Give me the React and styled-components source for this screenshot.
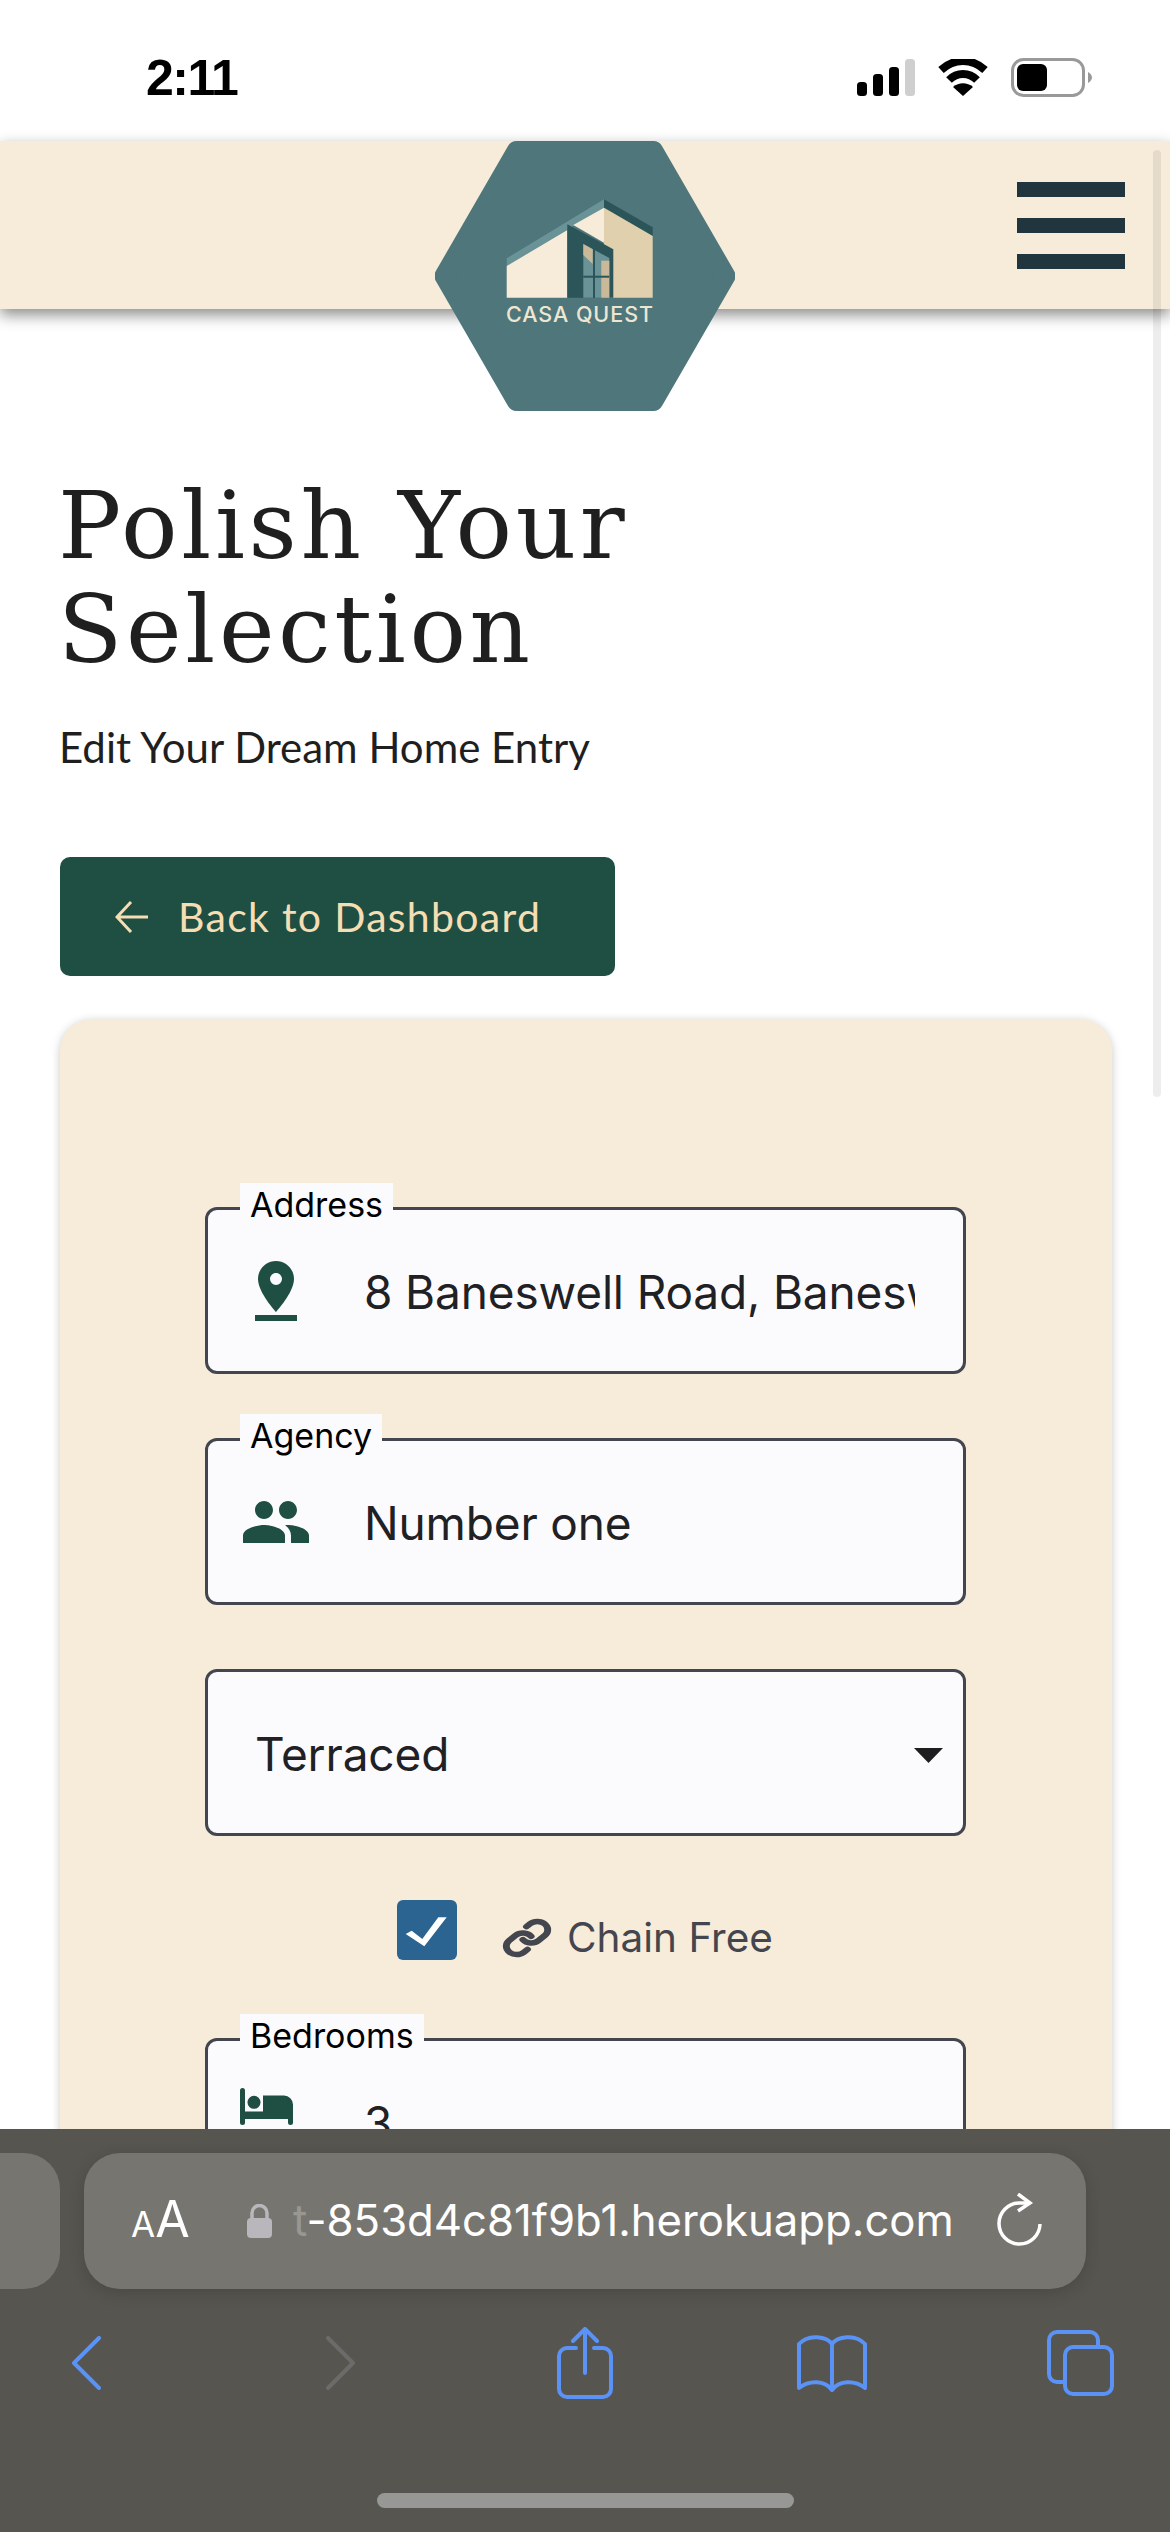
import styled, { createGlobalStyle } from 'styled-components'
import { MdPinDrop, MdPeople } from 'react-icons/md'

const GlobalStyle = createGlobalStyle`
  html, body {
    margin: 0;
    padding: 0;
    background: #ffffff;
  }
  * {
    box-sizing: border-box;
  }
`

const Screen = styled.div`
  position: relative;
  width: 1170px;
  height: 2532px;
  overflow: hidden;
  background: #ffffff;
  font-family: Inter, "Liberation Sans", sans-serif;
`

const StatusBar = styled.div`
  height: 141px;
  padding: 58px 78px 0 146px;
  display: flex;
  align-items: flex-start;
  justify-content: space-between;
`

const Clock = styled.div`
  font-family: "Liberation Sans", sans-serif;
  font-size: 50px;
  line-height: 41px;
  font-weight: 700;
  color: #000000;
  letter-spacing: -1.5px;
`

const StatusIcons = styled.div`
  display: flex;
  align-items: center;
  gap: 23px;
  height: 39px;
`

const Nav = styled.nav`
  position: relative;
  height: 168px;
  background: #f7ecda;
  box-shadow: 0 6px 14px rgba(0, 0, 0, 0.45);
  display: flex;
  justify-content: flex-end;
  padding: 41px 45px 0 0;
`

const LogoMark = styled.svg`
  position: absolute;
  top: 0;
  left: 435px;
  width: 300px;
  height: 270px;
`

const Burger = styled.div`
  display: flex;
  flex-direction: column;
  gap: 21px;
`

const BurgerBar = styled.span`
  display: block;
  width: 108px;
  height: 15px;
  background: #20353e;
`

const Main = styled.main`
  padding: 165px 58px 0 60px;
`

const Title = styled.h1`
  margin: 0 0 0 -2px;
  width: 700px;
  font-family: "DejaVu Serif", serif;
  font-size: 94px;
  line-height: 104px;
  font-weight: 400;
  letter-spacing: 3.6px;
  color: #1f1f1f;
`

const Subtitle = styled.p`
  margin: 38px 0 0 -1px;
  font-family: Lato, sans-serif;
  font-size: 42px;
  line-height: 54px;
  color: #1f1f1f;
`

const BackButton = styled.div`
  margin-top: 83px;
  width: 555px;
  height: 119px;
  border-radius: 10px;
  background: #1f4f43;
  color: #f5deb3;
  display: flex;
  align-items: center;
  padding-left: 55px;
  gap: 30px;
  font-family: Lato, sans-serif;
  font-size: 41px;
  letter-spacing: 1.3px;
`

const Card = styled.section`
  margin-top: 43px;
  background: #f7ecda;
  border-radius: 32px;
  padding: 188px 146px 120px 145px;
  box-shadow: 0 2px 10px rgba(0, 0, 0, 0.22);
  display: flex;
  flex-direction: column;
`

const Field = styled.div`
  position: relative;
  height: 167px;
  margin-bottom: ${(props) => props.$after || 64}px;
  background: #fbfbfe;
  border: 3px solid #44464f;
  border-radius: 12px;
  display: flex;
  align-items: center;
  padding: 0 48px 0 ${(props) => props.$inset || 32}px;
`

const FieldLabel = styled.span`
  position: absolute;
  top: -27px;
  left: 32px;
  height: 44px;
  padding: 0 10px;
  background: #fbfbfe;
  color: #000000;
  font-size: 34px;
  line-height: 44px;
  white-space: nowrap;
`

const FieldIcon = styled.span`
  flex: none;
  width: 72px;
  height: 72px;
  margin-right: 52px;
  color: #1f4f43;
  display: flex;
  align-items: center;
  justify-content: center;
`

const FieldValue = styled.span`
  flex: 1;
  min-width: 0;
  overflow: hidden;
  white-space: nowrap;
  color: #1f2124;
  font-size: 46px;
  line-height: 60px;
  letter-spacing: -0.15px;
  padding-top: 2px;
`

const BedGlyph = styled.svg`
  flex: none;
  margin: -30px 19px 0 0;
`

const SelectArrow = styled.svg`
  position: absolute;
  right: 20px;
  top: 76px;
  width: 29px;
  height: 15px;
`

const CheckRow = styled.div`
  display: flex;
  align-items: center;
  justify-content: flex-start;
  height: 60px;
  margin: 0 0 78px 192px;
`

const CheckBox = styled.span`
  flex: none;
  width: 60px;
  height: 60px;
  border-radius: 6px;
  background: #2b6391;
  margin-right: 45px;
`

const ChainLabel = styled.span`
  display: flex;
  align-items: center;
  gap: 15px;
  color: #44464f;
  font-size: 40.500px;
  line-height: 60px;
  padding-top: 16px;
`

const Scrollbar = styled.div`
  position: absolute;
  top: 150px;
  left: 1153px;
  width: 8px;
  height: 947px;
  border-radius: 4px;
  background: rgba(0, 0, 0, 0.07);
`

const BrowserChrome = styled.div`
  position: absolute;
  left: 0;
  right: 0;
  bottom: 0;
  height: 403px;
  background: #565550;
  display: flex;
  flex-direction: column;
  padding-top: 24px;
`

const TabRow = styled.div`
  display: flex;
  gap: 24px;
  height: 136px;
`

const SideTab = styled.div`
  width: 60px;
  border-radius: 0 36px 36px 0;
  background: #777570;
`

const AddressPill = styled.div`
  width: 1002px;
  border-radius: 36px;
  background: #777570;
  box-shadow: 0 4px 16px rgba(0, 0, 0, 0.14);
  display: flex;
  align-items: center;
  padding-left: 47px;
  color: #ffffff;
`

const TextSize = styled.span`
  display: flex;
  align-items: baseline;
  width: 116px;
  font-size: 50px;
  line-height: 60px;
  small {
    font-size: 35px;
  }
`

const LockIcon = styled.svg`
  flex: none;
  width: 25px;
  height: 34px;
  margin-right: 21px;
`

const UrlText = styled.span`
  width: 660px;
  white-space: nowrap;
  overflow: hidden;
  font-size: 43.700px;
  line-height: 60px;
  span {
    color: rgba(255, 255, 255, 0.25);
  }
`

const ReloadIcon = styled.svg`
  flex: none;
  width: 46px;
  height: 56px;
  margin-left: 44px;
`

const ToolRow = styled.div`
  margin-top: 37px;
  height: 74px;
  padding-left: 56px;
  display: grid;
  grid-template-columns: 254px 245px 247px 248px 60px;
  align-items: center;
`

const ToolSlot = styled.div`
  width: 60px;
  display: flex;
  justify-content: center;
  svg {
    flex: none;
  }
`

const HomeBar = styled.div`
  margin: auto auto 24px;
  width: 417px;
  height: 15px;
  border-radius: 8px;
  background: #979795;
`

function BedIcon() {
  return (
    <BedGlyph width="53" height="37" viewBox="0 0 53 37" fill="#1f4f43">
      <rect x="0" y="0" width="5" height="37" rx="2.500" />
      <circle cx="14" cy="14.300" r="6.500" />
      <path d="M23 7.600h21a9 9 0 0 1 9 9V34.500a2.500 2.500 0 0 1-5 0V31H3v-7.400h20z" />
    </BedGlyph>
  )
}

function LinkIcon() {
  return (
    <svg width="50" height="40" viewBox="0 0 24 24" preserveAspectRatio="none" fill="none" stroke="#44464f" strokeWidth="3.300" strokeLinecap="round">
      <path d="M10 13a5 5 0 0 0 7.540.540l3-3a5 5 0 0 0-7.070-7.070l-1.720 1.710" />
      <path d="M14 11a5 5 0 0 0-7.540-.540l-3 3a5 5 0 0 0 7.070 7.070l1.710-1.710" />
    </svg>
  )
}

function House() {
  return (
    <LogoMark viewBox="0 0 300 270">
      <polygon
        points="9.500,135 81.700,10 218.300,10 290.500,135 218.300,260 81.700,260"
        fill="#4e767b"
        stroke="#4e767b"
        strokeWidth="20"
        strokeLinejoin="round"
      />
      <polygon points="71.700,117.300 169,58.300 169,66.700 71.700,125" fill="#6a9397" />
      <polygon points="169,58.300 217.700,86.300 217.700,95 169,66.700" fill="#2b5559" />
      <polygon points="169,66.700 217.700,95 217.700,156.700 169,156.700" fill="#e0d0ae" />
      <polygon points="71.700,125 132.300,89 132.300,156.700 71.700,156.700" fill="#f7ecda" />
      <polygon points="138.300,84 169,66.700 169,101.700" fill="#f7ecda" />
      <polygon points="132.300,83.300 178.300,108.300 178.300,156.700 132.300,156.700" fill="#2b5559" />
      <polygon points="148.300,103 174.300,117 174.300,156.700 148.300,156.700" fill="#6a9397" />
      <polygon points="148.300,103 157.700,108.300 157.700,123 148.300,114" fill="#c9b998" />
      <rect x="166.300" y="119.700" width="8" height="37" fill="#c9b998" />
      <rect x="158" y="105" width="2" height="52" fill="#2b5559" />
      <rect x="148.300" y="134.700" width="26" height="2" fill="#2b5559" />
      <text
        x="71"
        y="180.700"
        fontFamily="Inter, sans-serif"
        fontSize="21.500"
        fontWeight="500"
        fill="#efe6d2"
        textLength="147"
        lengthAdjust="spacing"
      >
        CASA QUEST
      </text>
    </LogoMark>
  )
}

export default function App() {
  return (
    <Screen>
      <GlobalStyle />
      <StatusBar>
        <Clock>2:11</Clock>
        <StatusIcons>
          <svg width="58" height="37" viewBox="0 0 58 37">
            <rect x="0" y="23" width="10" height="14" rx="3.500" fill="#000" />
            <rect x="16" y="15" width="10" height="22" rx="3.500" fill="#000" />
            <rect x="32" y="8" width="10" height="29" rx="3.500" fill="#000" />
            <rect x="48" y="0" width="10" height="37" rx="3.500" fill="#cfcfcf" />
          </svg>
          <svg width="50" height="37" viewBox="0 0 50 37">
            <path d="M3 11C16-1 34-1 47 11" fill="none" stroke="#000" strokeWidth="8" />
            <path d="M11 21C19 13 31 13 39 21" fill="none" stroke="#000" strokeWidth="8" />
            <path d="M25 37L15 28C21 23 29 23 35 28z" fill="#000" />
          </svg>
          <svg width="81" height="39" viewBox="0 0 81 39">
            <rect x="1.500" y="1.500" width="71" height="36" rx="11" fill="none" stroke="#999" strokeWidth="3" />
            <rect x="6" y="6" width="30" height="27" rx="6" fill="#000" />
            <path d="M77 14c2 1 4 3 4 5.500s-2 4.500-4 5.500z" fill="#999" />
          </svg>
        </StatusIcons>
      </StatusBar>

      <Nav>
        <House />
        <Burger>
          <BurgerBar />
          <BurgerBar />
          <BurgerBar />
        </Burger>
      </Nav>

      <Main>
        <Title>Polish Your Selection</Title>
        <Subtitle>Edit Your Dream Home Entry</Subtitle>
        <BackButton>
          <svg width="33" height="32" viewBox="0 0 33 32" fill="none" stroke="#f5deb3" strokeWidth="3">
            <path d="M33 16H2M16 1L2 16l14 15" />
          </svg>
          Back to Dashboard
        </BackButton>

        <Card>
          <Field>
            <FieldLabel>Address</FieldLabel>
            <FieldIcon><MdPinDrop size={72} /></FieldIcon>
            <FieldValue>8 Baneswell Road, Baneswell</FieldValue>
          </Field>
          <Field>
            <FieldLabel>Agency</FieldLabel>
            <FieldIcon><MdPeople size={72} /></FieldIcon>
            <FieldValue>Number one</FieldValue>
          </Field>
          <Field $inset={47}>
            <FieldValue>Terraced</FieldValue>
            <SelectArrow viewBox="0 0 29 15">
              <path d="M0 0h29L14.500 15z" fill="#1e1e1e" />
            </SelectArrow>
          </Field>
          <CheckRow>
            <CheckBox>
              <svg width="60" height="60" viewBox="0 0 60 60">
                <polygon points="8.700,34 14.700,30.700 25.300,39 41.300,17.300 49.700,17.300 27.300,46.300" fill="#fff" />
              </svg>
            </CheckBox>
            <ChainLabel>
              <LinkIcon />
              Chain Free
            </ChainLabel>
          </CheckRow>
          <Field>
            <FieldLabel>Bedrooms</FieldLabel>
            <FieldIcon><BedIcon /></FieldIcon>
            <FieldValue>3</FieldValue>
          </Field>
        </Card>
      </Main>

      <Scrollbar />

      <BrowserChrome>
        <TabRow>
          <SideTab />
          <AddressPill>
            <TextSize><small>A</small>A</TextSize>
            <LockIcon viewBox="0 0 25 34">
              <path d="M5 15V9a7.500 7.500 0 0 1 15 0v6" fill="none" stroke="#b9b7bb" strokeWidth="3.500" />
              <rect x="0" y="14" width="25" height="20" rx="4" fill="#b9b7bb" />
            </LockIcon>
            <UrlText><span>t</span>-853d4c81f9b1.herokuapp.com</UrlText>
            <ReloadIcon viewBox="0 0 46 56" fill="none" stroke="#fff" strokeWidth="3.500">
              <path d="M32 10H22A20.500 20.500 0 1 0 43 31" />
              <path d="M21 1l12 9-12 8" />
            </ReloadIcon>
          </AddressPill>
        </TabRow>
        <ToolRow>
          <ToolSlot>
            <svg width="29" height="54" viewBox="0 0 29 54" fill="none" stroke="#5a93f5" strokeWidth="4" strokeLinecap="round" strokeLinejoin="round">
              <path d="M27 2L2 27l25 25" />
            </svg>
          </ToolSlot>
          <ToolSlot>
            <svg width="29" height="54" viewBox="0 0 29 54" fill="none" stroke="#6c6b6a" strokeWidth="4" strokeLinecap="round" strokeLinejoin="round">
              <path d="M2 2l25 25L2 52" />
            </svg>
          </ToolSlot>
          <ToolSlot>
            <svg width="56" height="72" viewBox="0 0 56 72" fill="none" stroke="#5a93f5" strokeWidth="4" strokeLinecap="round" strokeLinejoin="round">
              <path d="M19 21H10a8 8 0 0 0-8 8v33a8 8 0 0 0 8 8h36a8 8 0 0 0 8-8V29a8 8 0 0 0-8-8h-9" />
              <path d="M28 46V2M16 14L28 2l12 12" />
            </svg>
          </ToolSlot>
          <ToolSlot>
            <svg width="70" height="58" viewBox="0 0 70 58" fill="none" stroke="#5a93f5" strokeWidth="4" strokeLinecap="round" strokeLinejoin="round">
              <path d="M35 10C30 3 12 -1 2 10V54C12 46 28 46 35 56C42 46 58 46 68 54V10C58 -1 40 3 35 10V56" />
            </svg>
          </ToolSlot>
          <ToolSlot>
            <svg width="67" height="66" viewBox="0 0 67 66" fill="none" stroke="#5a93f5" strokeWidth="4" strokeLinejoin="round">
              <path d="M16 52H10a8 8 0 0 1-8-8V10a8 8 0 0 1 8-8h33a8 8 0 0 1 8 8v6" />
              <rect x="18" y="17" width="47" height="47" rx="8" />
            </svg>
          </ToolSlot>
        </ToolRow>
        <HomeBar />
      </BrowserChrome>
    </Screen>
  )
}
